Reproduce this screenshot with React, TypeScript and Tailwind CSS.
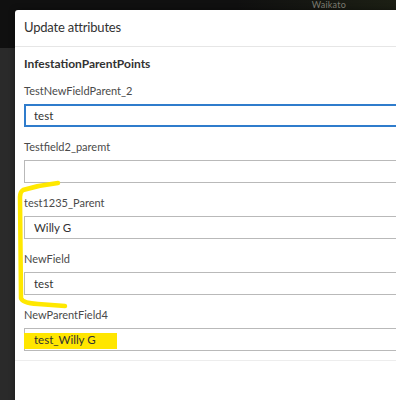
import React from "react";

const fields = [
  { label: "TestNewFieldParent_2", value: "test", focused: true },
  { label: "Testfield2_paremt", value: "" },
  { label: "test1235_Parent", value: "Willy G" },
  { label: "NewField", value: "test" },
  { label: "NewParentField4", value: "test_Willy G", marked: true },
];

const Field = ({ label, value, focused, marked }: { label: string; value: string; focused?: boolean; marked?: boolean }) => (
  <div className="flex flex-col mb-[9px]">
    <div className="h-[22px] leading-[22px] text-[11px] text-[#4a4a4a]">{label}</div>
    <div
      className={
        focused
          ? "relative mt-[2px] h-[23px] w-[400px] flex items-center text-[11.5px] text-[#323232] border-2 border-[#2f7ccc] pl-[8px]"
          : "relative mt-[2px] h-[23px] w-[400px] flex items-center text-[11.5px] text-[#323232] border border-[#b9b9b9] pl-[9px]"
      }
    >
      {marked && <div className="absolute left-[-1px] top-[4px] w-[93px] h-[16px] bg-[#ffe600]" />}
      <span className="relative">{value}</span>
    </div>
  </div>
);

export default function App() {
  return (
    <div className="relative w-[396px] h-[400px] overflow-hidden font-[Lato,sans-serif] bg-[linear-gradient(#101010_48px,#2a2a2a_48px)]">
      {/* map strip */}
      <div className="h-[10px] flex justify-end pr-[50px] bg-[linear-gradient(90deg,#101010_60%,#1c1f14)]">
        <span className="text-[9px] leading-[10px] text-[#7a7a70] tracking-wide">Waikato</span>
      </div>

      {/* dialog */}
      <div className="ml-[15px] w-[400px] h-[400px] bg-white rounded-tl-[3px] shadow-[0_0_6px_rgba(0,0,0,0.4)]">
        <div className="h-[37px] flex items-center pl-[9px] border-b border-[#e6e6e6] text-[13px] tracking-[-0.2px] text-[#323232]">
          Update attributes
        </div>
        <div className="pl-[9px]">
          <div className="mt-[7px] h-[20px] leading-[20px] text-[12px] font-bold text-[#323232]">InfestationParentPoints</div>
          <div className="mt-[6px]">
            {fields.map((f) => (
              <Field key={f.label} {...f} />
            ))}
          </div>
        </div>
        <div className="mt-[8px] border-t border-[#ededed]" />
      </div>

      {/* annotation */}
      <svg className="absolute inset-0 pointer-events-none" width="396" height="400">
        <path
          d="M58 183 Q40 185 23 190 Q20 192 20 197 L21 298 Q22 303 38 304 L65 306"
          fill="none"
          stroke="#ffe800"
          strokeWidth="4.5"
          strokeLinecap="round"
          strokeLinejoin="round"
        />
      </svg>
    </div>
  );
}
